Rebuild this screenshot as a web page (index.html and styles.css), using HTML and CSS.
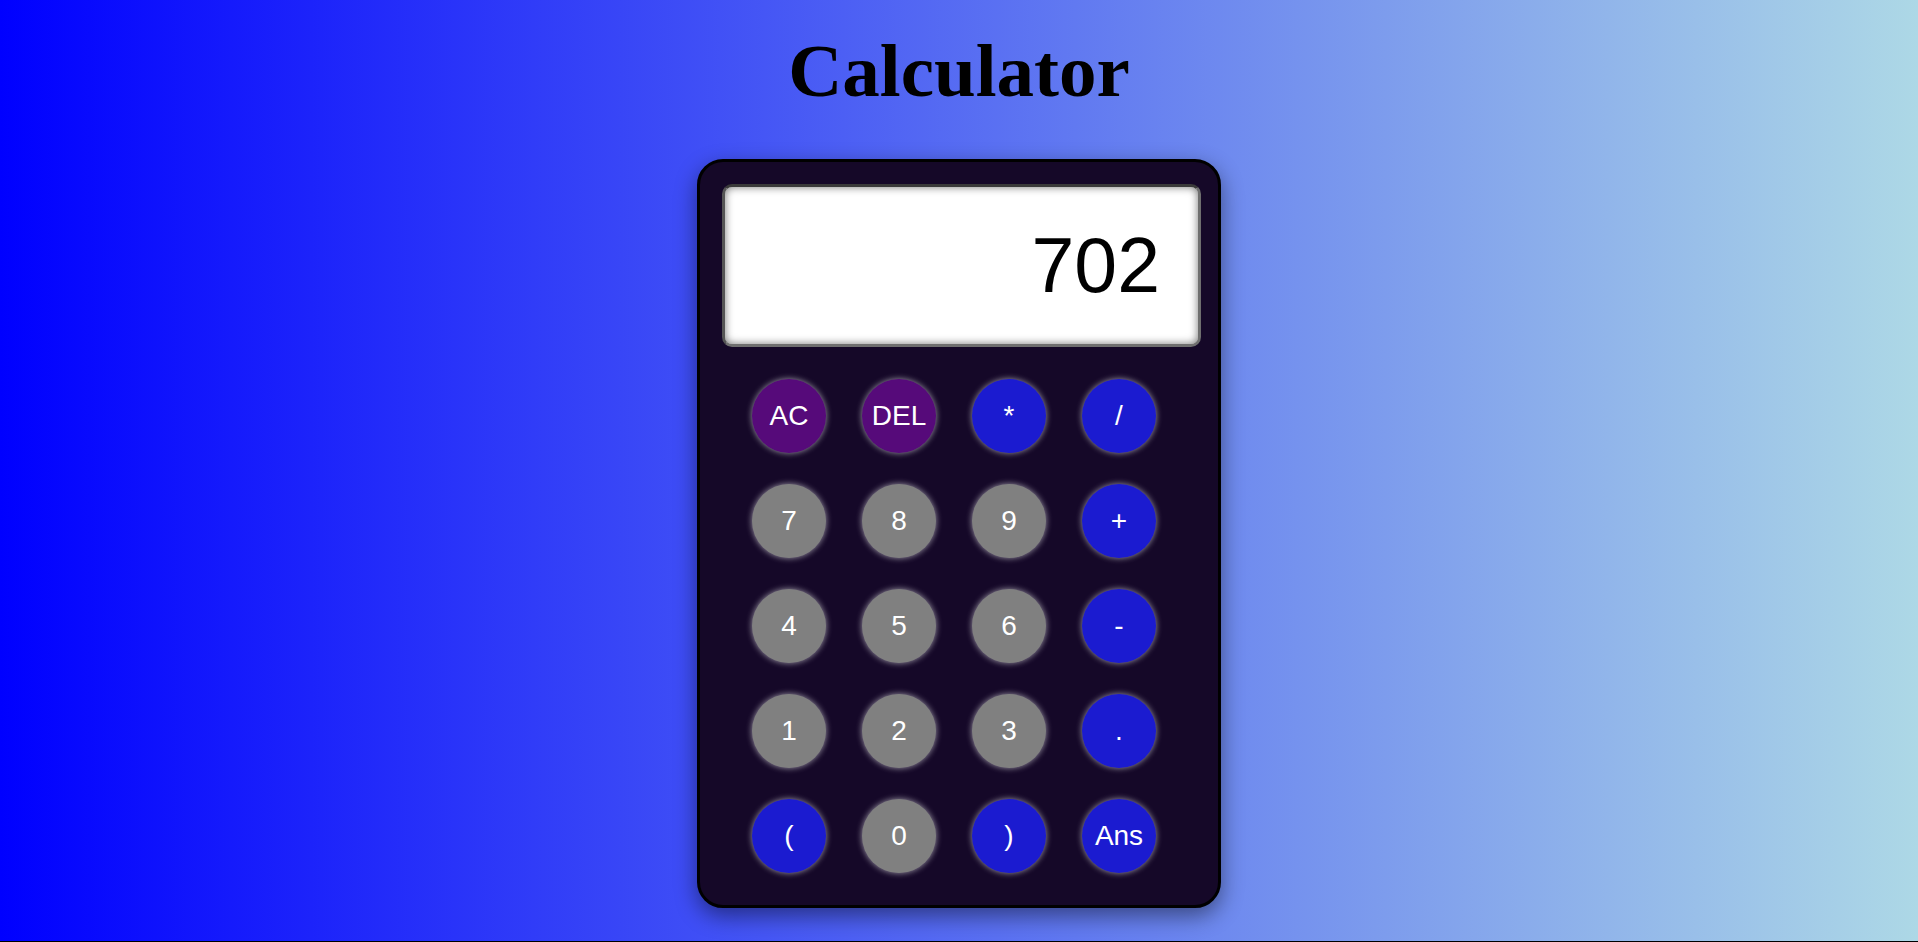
FILE: index.html
```html
<!DOCTYPE html>
<html lang="en">
<head>
<meta charset="utf-8">
<title>Calculator</title>
<link rel="stylesheet" href="styles.css">
</head>
<body>
  <h1 class="title">Calculator</h1>
  <div class="calculator">
    <div class="display">702</div>
    <div class="keys">
      <button class="key key-clear">AC</button>
      <button class="key key-clear">DEL</button>
      <button class="key key-op">*</button>
      <button class="key key-op">/</button>
      <button class="key key-num">7</button>
      <button class="key key-num">8</button>
      <button class="key key-num">9</button>
      <button class="key key-op">+</button>
      <button class="key key-num">4</button>
      <button class="key key-num">5</button>
      <button class="key key-num">6</button>
      <button class="key key-op">-</button>
      <button class="key key-num">1</button>
      <button class="key key-num">2</button>
      <button class="key key-num">3</button>
      <button class="key key-op">.</button>
      <button class="key key-op">(</button>
      <button class="key key-num">0</button>
      <button class="key key-op">)</button>
      <button class="key key-op">Ans</button>
    </div>
  </div>
</body>
</html>
```

FILE: styles.css
```css
html {
  background: #000;
}
body {
  margin: 0;
  height: 941px;
  background: linear-gradient(to right, #0000ff, #add8e6);
  display: flex;
  flex-direction: column;
  align-items: center;
  font-family: "Liberation Sans", Arial, sans-serif;
}
.title {
  font-family: "Liberation Serif", "Times New Roman", serif;
  font-weight: bold;
  font-size: 75px;
  line-height: 85px;
  margin: 28px 0 46px;
  color: #000;
}
.calculator {
  box-sizing: border-box;
  width: 524px;
  height: 749px;
  background: #150828;
  border: 3px solid #000;
  border-radius: 26px;
  box-shadow: 0 8px 22px rgba(0, 0, 0, 0.45);
  padding: 22px 17px 0 22px;
}
.display {
  box-sizing: border-box;
  width: 479px;
  height: 163px;
  background: #fff;
  border: 3px solid #6f6f6f;
  border-top-color: #3a3a3a;
  border-left-color: #555;
  border-radius: 10px;
  box-shadow: inset 0 0 8px rgba(0, 0, 0, 0.55);
  display: flex;
  align-items: center;
  justify-content: flex-end;
  padding-right: 38px;
  font-size: 77px;
  line-height: 1;
  color: #000;
}
.keys {
  display: grid;
  grid-template-columns: repeat(4, 74px);
  column-gap: 36px;
  row-gap: 31px;
  margin: 32px 0 0 30px;
}
.key {
  width: 74px;
  height: 74px;
  border: none;
  border-radius: 50%;
  padding: 0;
  color: #fff;
  font-family: "Liberation Sans", Arial, sans-serif;
  font-size: 28px;
  box-shadow: 0 0 6px rgba(255, 255, 255, 0.6);
}
.key-clear {
  background: #560a7a;
}
.key-op {
  background: #1b1bd0;
}
.key-num {
  background: #808080;
}
```
